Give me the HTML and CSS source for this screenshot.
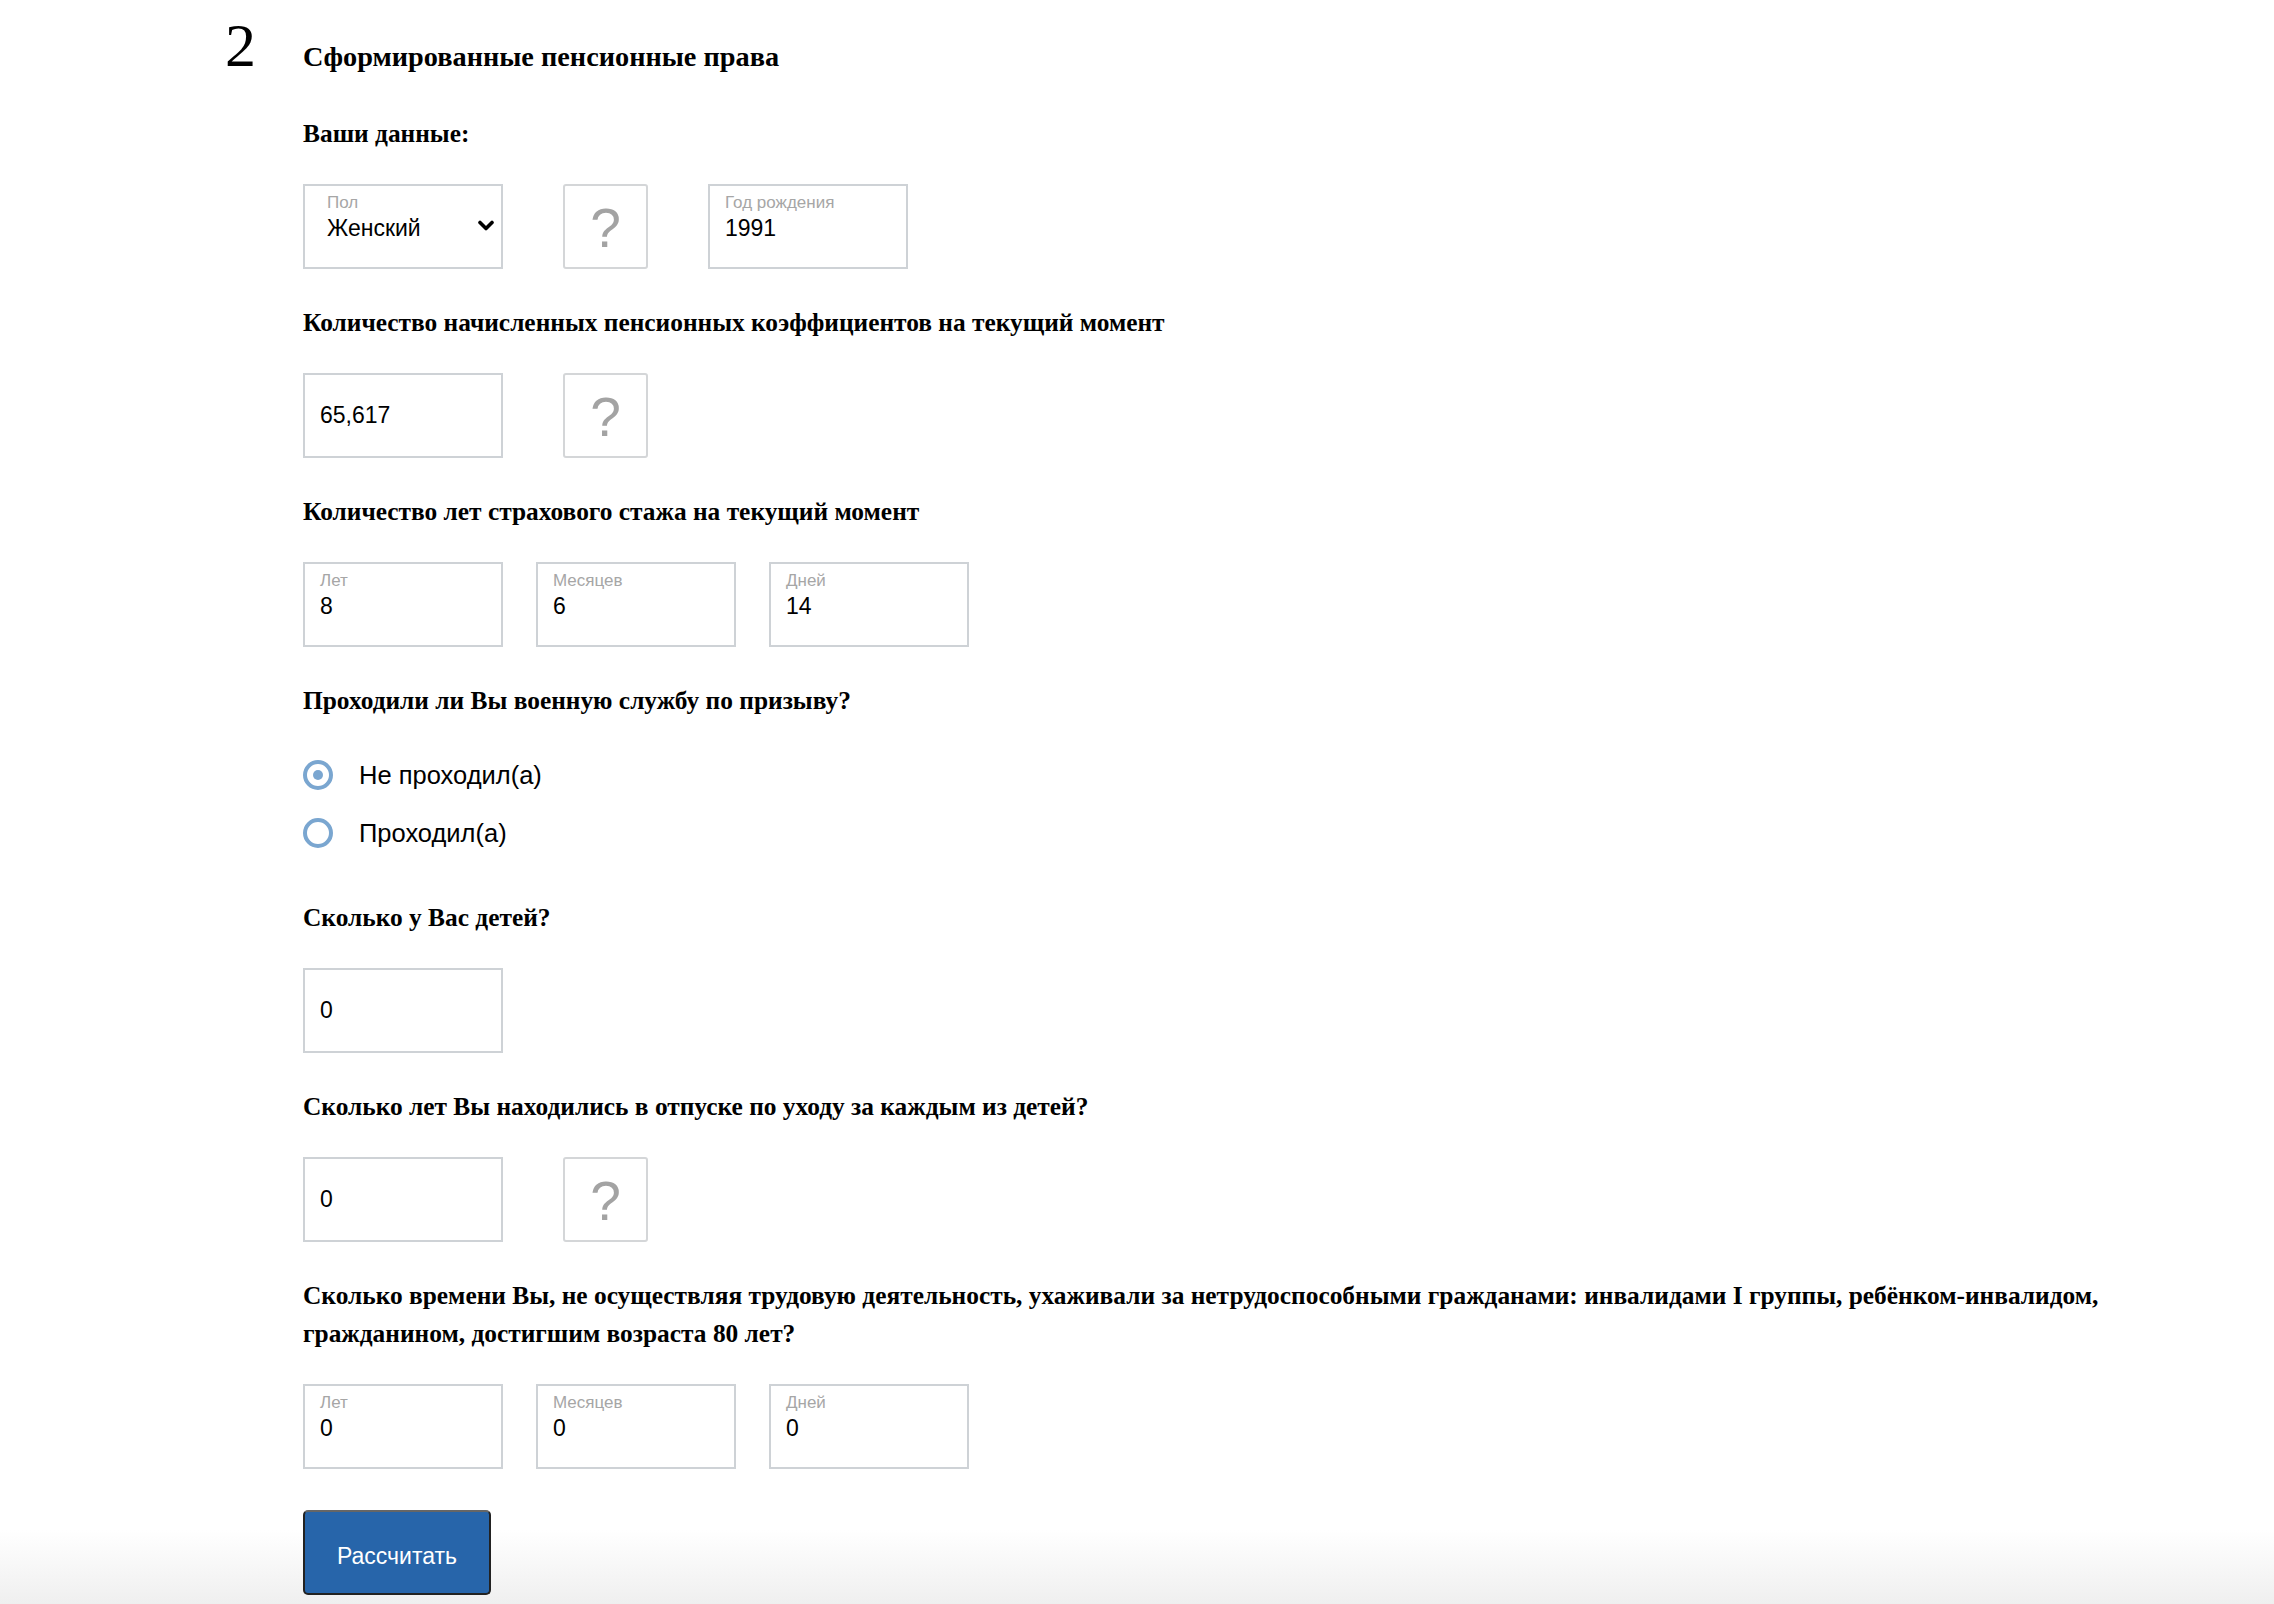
FILE: index.html
```html
<!DOCTYPE html>
<html lang="ru">
<head>
<meta charset="utf-8">
<title>Сформированные пенсионные права</title>
<link rel="stylesheet" href="styles.css">
</head>
<body>
<div class="page">
  <div class="head">
    <span class="num">2</span>
    <h2 class="title">Сформированные пенсионные права</h2>
  </div>
  <div class="content">
    <div class="group">
      <div class="q">Ваши данные:</div>
      <div class="row">
        <div class="field field-select">
          <div class="fl">Пол</div>
          <div class="fv">Женский</div>
          <svg class="chev" width="16" height="12" viewBox="0 0 16 12"><path d="M2 2.5 L8 8.5 L14 2.5" fill="none" stroke="#000" stroke-width="3.6" stroke-linecap="round" stroke-linejoin="round"/></svg>
        </div>
        <div class="help">?</div>
        <div class="field">
          <div class="fl">Год рождения</div>
          <div class="fv">1991</div>
        </div>
      </div>
    </div>

    <div class="group">
      <div class="q">Количество начисленных пенсионных коэффициентов на текущий момент</div>
      <div class="row">
        <div class="field field-single"><div class="fv">65,617</div></div>
        <div class="help">?</div>
      </div>
    </div>

    <div class="group">
      <div class="q">Количество лет страхового стажа на текущий момент</div>
      <div class="row row-tri">
        <div class="field"><div class="fl">Лет</div><div class="fv">8</div></div>
        <div class="field"><div class="fl">Месяцев</div><div class="fv">6</div></div>
        <div class="field"><div class="fl">Дней</div><div class="fv">14</div></div>
      </div>
    </div>

    <div class="group group-radio">
      <div class="q">Проходили ли Вы военную службу по призыву?</div>
      <div class="radios">
        <div class="radio"><span class="rc rc-on"></span><span class="rt">Не проходил(а)</span></div>
        <div class="radio"><span class="rc"></span><span class="rt">Проходил(а)</span></div>
      </div>
    </div>

    <div class="group">
      <div class="q">Сколько у Вас детей?</div>
      <div class="row">
        <div class="field field-single"><div class="fv">0</div></div>
      </div>
    </div>

    <div class="group">
      <div class="q">Сколько лет Вы находились в отпуске по уходу за каждым из детей?</div>
      <div class="row">
        <div class="field field-single"><div class="fv">0</div></div>
        <div class="help">?</div>
      </div>
    </div>

    <div class="group group-last">
      <div class="q">Сколько времени Вы, не осуществляя трудовую деятельность, ухаживали за нетрудоспособными гражданами: инвалидами I группы, ребёнком-инвалидом, гражданином, достигшим возраста 80 лет?</div>
      <div class="row row-tri">
        <div class="field"><div class="fl">Лет</div><div class="fv">0</div></div>
        <div class="field"><div class="fl">Месяцев</div><div class="fv">0</div></div>
        <div class="field"><div class="fl">Дней</div><div class="fv">0</div></div>
      </div>
    </div>

    <button class="btn" type="button">Рассчитать</button>
  </div>
</div>
</body>
</html>
```
FILE: styles.css
```css
html {
  height: 1604px;
  background-color: #ffffff;
  background-image: linear-gradient(to bottom, #ffffff 0, #ffffff 1530px, #efefef 1604px);
  background-repeat: no-repeat;
}
body {
  margin: 0;
  font-family: "Liberation Serif", "Times New Roman", serif;
  color: #000;
}
.page {
  padding: 0 90px 0 225px;
}
.head {
  display: flex;
  align-items: baseline;
  height: 114px;
  box-sizing: border-box;
  padding-top: 14px;
}
.num {
  width: 78px;
  font-size: 62px;
  line-height: 62px;
  font-weight: normal;
}
.title {
  margin: 0;
  font-size: 28.3px;
  line-height: 40px;
  font-weight: bold;
}
.content {
  padding-left: 78px;
  width: 1880px;
}
.group {
  margin-bottom: 34px;
}
.group-last {
  margin-bottom: 0;
}
.q {
  font-size: 25.4px;
  line-height: 38px;
  font-weight: bold;
  margin-bottom: 32px;
}
.row {
  display: flex;
  gap: 60px;
}
.row-tri {
  gap: 33px;
}
.field {
  position: relative;
  width: 200px;
  height: 85px;
  box-sizing: border-box;
  border: 2px solid #ced2d6;
  background: #fff;
  padding: 7px 15px 0 15px;
  font-family: "Liberation Sans", Arial, sans-serif;
}
.field-select {
  padding-left: 22px;
}
.fl {
  font-size: 17px;
  line-height: 19px;
  color: #a6a6a6;
}
.fv {
  font-size: 23px;
  line-height: 27px;
  margin-top: 3px;
  color: #000;
}
.field-single {
  display: flex;
  align-items: center;
  padding: 0 15px;
}
.field-single .fv {
  margin-top: 0;
}
.chev {
  position: absolute;
  right: 7px;
  top: 34px;
}
.help {
  width: 85px;
  height: 85px;
  box-sizing: border-box;
  border: 2px solid #d4d6d8;
  border-radius: 3px;
  display: flex;
  align-items: center;
  justify-content: center;
  font-family: "Liberation Sans", Arial, sans-serif;
  font-size: 55px;
  line-height: 1;
  color: #a3a3a3;
  padding-top: 4px;
}
.group-radio .q {
  margin-bottom: 27px;
}
.group-radio {
  margin-bottom: 36px;
}
.radio {
  display: flex;
  align-items: center;
  height: 58px;
}
.rc {
  width: 30px;
  height: 30px;
  box-sizing: border-box;
  border: 4px solid #7aa6d0;
  border-radius: 50%;
  display: flex;
  align-items: center;
  justify-content: center;
  margin-right: 26px;
  background: #fff;
}
.rc-on::after {
  content: "";
  width: 10px;
  height: 10px;
  border-radius: 50%;
  background: #7aa6d0;
}
.rt {
  font-family: "Liberation Sans", Arial, sans-serif;
  font-size: 25.5px;
  color: #000;
}
.btn {
  display: block;
  margin-top: 41px;
  width: 188px;
  height: 85px;
  box-sizing: border-box;
  background: #2765aa;
  border: 2px solid #222;
  border-top-color: #666;
  border-radius: 5px;
  color: #fff;
  font-family: "Liberation Sans", Arial, sans-serif;
  font-size: 23px;
  padding: 7px 0 0 0;
}
```
